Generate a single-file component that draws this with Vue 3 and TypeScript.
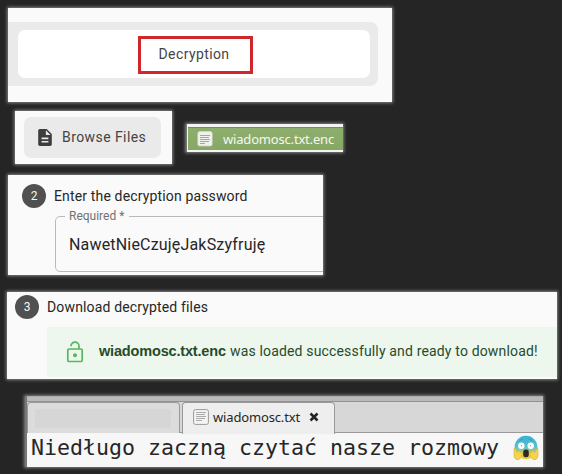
<script setup lang="ts">
const activeTab: string = 'Decryption'
const encryptedFile: string = 'wiadomosc.txt.enc'
const password: string = 'NawetNieCzujęJakSzyfruję'
const plainFile: string = 'wiadomosc.txt'
const message: string = 'Niedługo zaczną czytać nasze rozmowy'
</script>

<template>
  <main class="board">
    <section class="panel tabs-panel">
      <div class="tabs-track">
        <div class="tab-pill">
          <span class="highlight"><span class="t-tab">{{ activeTab }}</span></span>
        </div>
      </div>
    </section>

    <div class="row">
      <section class="panel browse-panel">
        <button class="browse">
          <svg class="doc-icon" viewBox="4 2 16 20">
            <path d="M14 2H6c-1.1 0-2 .9-2 2v16c0 1.1.9 2 2 2h12c1.1 0 2-.9 2-2V8l-6-6zm2 16H8v-2h8v2zm0-4H8v-2h8v2zm-3-5V3.5L18.500 9H13z" />
          </svg>
          <span class="t-browse">Browse Files</span>
        </button>
      </section>
      <section class="panel file-panel">
        <div class="file-row">
          <svg class="text-icon" viewBox="0 0 16 16">
            <rect x="1" y=".8" width="14" height="14" rx="1.500" fill="#f1f2ed" stroke="#e2e6db" />
            <path d="M3 4.500h10M3 6.500h9M3 8.500h10M3 10.500h9M3 12.500h5" stroke="#a4a6a0" />
          </svg>
          <span class="t-file">{{ encryptedFile }}</span>
        </div>
      </section>
    </div>

    <section class="panel password-panel">
      <div class="step">
        <span class="badge">2</span>
        <span class="t-enter">Enter the decryption password</span>
      </div>
      <div class="step-body">
        <div class="rail"></div>
        <fieldset class="field">
          <legend><span class="t-required">Required *</span></legend>
          <span class="t-password">{{ password }}</span>
        </fieldset>
      </div>
    </section>

    <section class="panel download-panel">
      <div class="step">
        <span class="badge">3</span>
        <span class="t-download">Download decrypted files</span>
      </div>
      <div class="alert">
        <svg class="lock-icon" viewBox="0 0 18 22" fill="none" stroke="#58b75e" stroke-width="1.700">
          <rect x="1.800" y="8" width="14.400" height="12.500" rx="1.200" />
          <path d="M5 5.200a4 4 0 0 1 8 0V8" />
          <circle cx="9" cy="14.200" r="2" fill="#58b75e" stroke="none" />
        </svg>
        <p><b>{{ encryptedFile }}</b><span class="t-loaded">was loaded successfully and ready to download!</span></p>
      </div>
    </section>

    <section class="panel editor-panel">
      <div class="editor-tabs">
        <div class="editor-tab idle"><span class="smudge"></span></div>
        <div class="editor-tab current">
          <svg class="text-icon" viewBox="0 0 16 16">
            <rect x=".6" y=".6" width="14.800" height="14.800" rx="1.800" fill="#f4f4f4" stroke="#999" />
            <path d="M3 3.500h10M3 5.500h9M3 7.500h10M3 9.500h9M3 11.500h6" stroke="#aaa" />
          </svg>
          <span class="t-plain">{{ plainFile }}</span>
          <svg class="close" viewBox="0 0 10 10"><path d="M1.500 1.500l7 7M8.500 1.500l-7 7" stroke="#222" stroke-width="2.500" /></svg>
        </div>
      </div>
      <div class="editor-text">
        <span class="t-message">{{ message }}</span>
        <svg class="scream" viewBox="0 0 26 26">
          <defs>
            <linearGradient id="face" x1="0" y1="0" x2="0" y2="1">
              <stop offset="0" stop-color="#35b3d6" />
              <stop offset=".48" stop-color="#59bfce" />
              <stop offset=".78" stop-color="#dcd357" />
              <stop offset="1" stop-color="#f6cf33" />
            </linearGradient>
          </defs>
          <ellipse cx="13" cy="12.500" rx="11.500" ry="11.800" fill="url(#face)" />
          <path d="M6.500 6q1.500-1.800 3.500-2M16 4q2 .2 3.500 2" fill="none" stroke="#2a93b2" stroke-width=".7" />
          <circle cx="8.300" cy="10.700" r="3.200" fill="#fff" />
          <circle cx="17.700" cy="10.700" r="3.200" fill="#fff" />
          <circle cx="8.500" cy="10.700" r=".6" fill="#7b9498" />
          <circle cx="17.500" cy="10.700" r=".6" fill="#7b9498" />
          <rect x="10.200" y="14.500" width="5.600" height="7.800" rx="2.400" fill="#2f2924" />
          <path d="M1 13.500q1.800-.3 2.500 2.700l1 1.300 1.500-2q1.500-.2 1 2l2-.5q1.300.5.200 2l-1 3.500q-2.500 3-5.200 2Q.3 22.500 1 18.500z" fill="#f5d44b" stroke="#d2a630" stroke-width=".5" />
          <path d="M25 13.500q-1.800-.3-2.500 2.700l-1 1.300-1.500-2q-1.500-.2-1 2l-2-.5q-1.300.5-.2 2l1 3.500q2.500 3 5.200 2 2.700-2 2-6z" fill="#f5d44b" stroke="#d2a630" stroke-width=".5" />
        </svg>
      </div>
    </section>
  </main>
</template>

<style>
body {
  background: #252525;
}
</style>

<style scoped>
* {
  box-sizing: border-box;
}

.board {
  width: 562px;
  height: 474px;
  padding: 8px 0 0 7px;
  overflow: hidden;
  background: #252525;
  color: #262626;
  font-family: Roboto, sans-serif;
}

.board span, .board b {
  white-space: nowrap;
}

.panel {
  background: #fafafa;
  box-shadow: 0 0 3px 1px #858585;
  overflow: hidden;
}

.tabs-panel {
  width: 384px;
  height: 94px;
  margin-left: 1px;
  padding-top: 14px;
}

.tabs-track {
  width: 370px;
  height: 64px;
  padding: 8px 8px 8px 10px;
  border-radius: 0 8px 8px 0;
  background: #eaeaea;
}

.tab-pill {
  display: flex;
  height: 48px;
  padding: 6px 0 0 119.500px;
  border-radius: 7px;
  background: #fff;
}

.highlight {
  display: flex;
  align-items: center;
  width: 115px;
  height: 38px;
  padding: 0 0 2px 18px;
  border: 3px solid #cf272c;
}

.t-tab {
  font-size: 14px;
  letter-spacing: 0.4px;
  color: #444;
}

.row {
  display: flex;
  align-items: flex-start;
  height: 53px;
  margin-top: 9px;
}

.browse-panel {
  width: 157px;
  height: 53px;
  margin-left: 8px;
  padding: 6px 9px;
}

.browse {
  display: flex;
  align-items: center;
  width: 137px;
  height: 41px;
  padding: 0 0 1px 14px;
  border: 0;
  border-radius: 7px;
  background: #eaeaea;
  color: #444;
  font-family: inherit;
}

.doc-icon {
  width: 14px;
  height: 17px;
  margin-right: 10px;
  fill: #3d3d3d;
}

.t-browse {
  font-size: 14px;
  letter-spacing: 0.42px;
}

.file-panel {
  width: 157px;
  height: 28px;
  margin: 13px 0 0 14px;
  padding: 3px 0 2px 2px;
  border-left: 1px solid #777;
  background: #f3f3f1;
}

.file-row {
  display: flex;
  align-items: center;
  height: 23px;
  margin-left: -1px;
  padding: 0 0 1px 9px;
  border-top: 1px solid #778967;
  background: linear-gradient(#8dae6d, #87a765);
}

.text-icon {
  width: 16px;
  height: 16px;
  flex: none;
}

.t-file {
  margin-left: 10px;
  color: #f5f8ef;
  font: 13px "Noto Sans", sans-serif;
  letter-spacing: -0.18px;
}

.password-panel {
  width: 315px;
  height: 100px;
  margin: 11px 0 0 1px;
  padding-top: 9px;
}

.step {
  display: flex;
  align-items: center;
  height: 24px;
  padding-left: 14px;
  gap: 8px;
}

.download-panel .step {
  padding-left: 8px;
}

.badge {
  display: grid;
  place-items: center;
  width: 24px;
  height: 24px;
  border-radius: 50%;
  background: #505050;
  color: #f4f4f4;
  font-size: 12px;
}

.t-enter, .t-download {
  font-size: 14px;
  letter-spacing: 0.15px;
}

.step-body {
  display: flex;
  align-items: flex-start;
}

.rail {
  width: 1px;
  height: 62px;
  margin: 8px 20px 0 26px;
  background: #bdbdbd;
}

.field {
  width: 290px;
  height: 63px;
  margin: 1px 0 0;
  padding: 12px 14px 0 12px;
  flex: none;
  border: 1px solid #bababa;
  border-radius: 5px;
}

.password-panel .field {
  margin-left: 1px;
}

legend {
  display: flex;
  height: 14px;
  margin-left: -3px;
  padding: 0 5px 0 4px;
  line-height: 14px;
  color: #717171;
}

.t-required {
  font-size: 12px;
}

.t-password {
  display: block;
  font-size: 16px;
  line-height: 20px;
  margin-left: 1px;
  letter-spacing: 0.18px;
}

.download-panel {
  width: 550px;
  height: 87px;
  margin-top: 17px;
  padding-top: 3px;
}

.alert {
  display: flex;
  align-items: center;
  height: 50px;
  margin: 8px 0 0 40px;
  padding-left: 19px;
  background: #edf7ee;
  color: #264b2b;
}

.lock-icon {
  width: 18px;
  height: 22px;
  margin-right: 15px;
}

.alert p {
  display: flex;
  align-items: baseline;
  margin: 0;
  padding-bottom: 2px;
}

.alert b {
  width: 131px;
  font: bold 14.500px "Liberation Sans", sans-serif;
  letter-spacing: -0.17px;
}

.t-loaded {
  font-size: 14px;
  letter-spacing: 0.16px;
}

.editor-panel {
  width: 518px;
  height: 71px;
  margin: 17px 0 0 18px;
  border-left: 2px solid #777;
  background: #f7f7f7;
}

.editor-tabs {
  display: flex;
  height: 37px;
  padding-top: 5px;
  border-top: 1px solid #aaa;
  border-bottom: 1px solid #999;
  background: linear-gradient(#b9b9b9 4px, #929292 4px, #929292 5px, #d7d7d7 5px);
}

.editor-tab {
  display: flex;
  align-items: center;
  height: 31px;
  border: 1px solid #999;
  border-bottom: 0;
  border-radius: 4px 4px 0 0;
}

.idle {
  width: 153px;
  margin-right: 2px;
  background: #dcdcdc;
}

.smudge {
  width: 136px;
  height: 19px;
  margin-left: 7px;
  background: #d6d6d6;
}

.current {
  width: 153px;
  height: 32px;
  padding: 0 0 3px 10px;
  background: #eee;
}

.t-plain {
  width: 96px;
  margin-left: 4px;
  font: 13px "Noto Sans", sans-serif;
  letter-spacing: -0.15px;
}

.close {
  width: 10px;
  height: 10px;
}

.editor-text {
  display: flex;
  align-items: center;
  height: 34px;
  padding: 0 0 4px 4px;
}

.t-message {
  width: 482px;
  font: 21.600px/30px "DejaVu Sans Mono", monospace;
}

.scream {
  width: 26px;
  height: 26px;
  flex: none;
}
</style>
